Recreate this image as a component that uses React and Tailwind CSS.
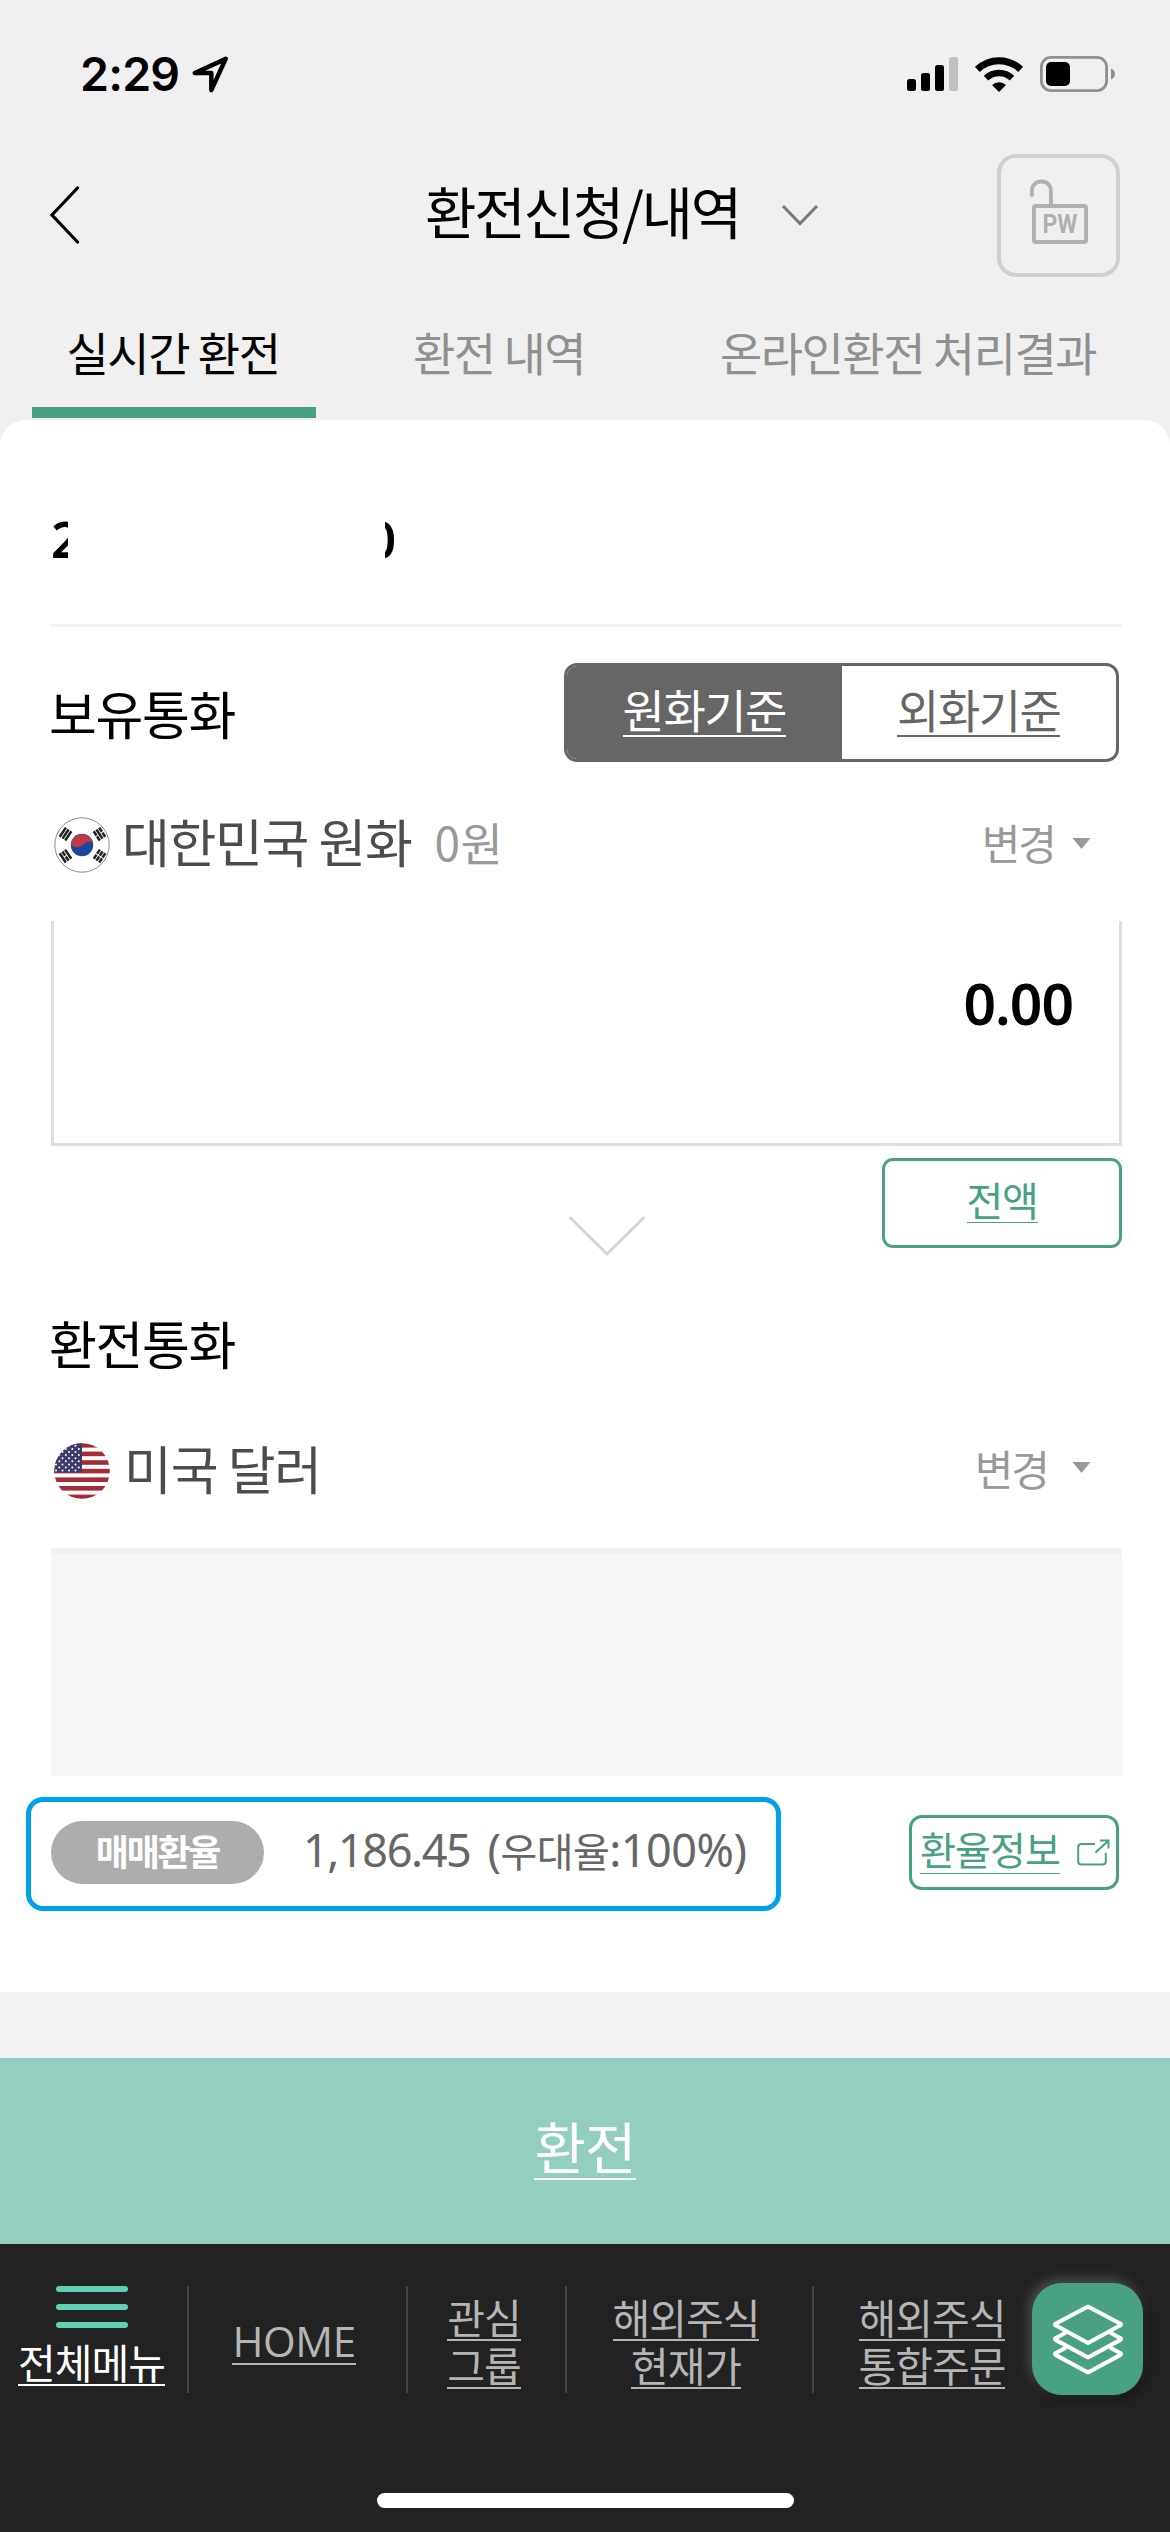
import React, { useState } from "react";

const TABS = [
  { id: "live", label: "실시간 환전", box: "w-[284px] ml-[32px]" },
  { id: "history", label: "환전 내역", box: "w-[212px] ml-[78px]" },
  { id: "result", label: "온라인환전 처리결과", box: "w-[420px] ml-[93px]" },
];

const BASIS = [
  { id: "krw", label: "원화기준" },
  { id: "foreign", label: "외화기준" },
];

const SHORTCUTS = [
  { lines: ["HOME"], box: "w-[219px] pr-[7px]" },
  { lines: ["관심", "그룹"], box: "w-[159px] pr-[5px]" },
  { lines: ["해외주식", "현재가"], box: "w-[247px] pr-[7px]" },
  { lines: ["해외주식", "통합주문"], box: "w-[238px]" },
];

/*
==========================
ICONS
==========================
*/

function LocationIcon() {
  return (
    <svg className="w-[37px] h-[37px]" viewBox="0 0 36 36" fill="none">
      <path
        d="M32.8 2.8 L2.8 16.6 H18.8 V33.2 Z"
        stroke="#000"
        strokeWidth="4.4"
        strokeLinejoin="round"
      />
    </svg>
  );
}

function SignalIcon() {
  return (
    <svg className="w-[51px] h-[34px]" viewBox="0 0 51 34">
      <rect x="0" y="22" width="9" height="12" rx="2.5" />
      <rect x="14" y="16" width="9" height="18" rx="2.5" />
      <rect x="28" y="8" width="9" height="26" rx="2.5" />
      <rect x="42" y="0" width="9" height="34" rx="2.5" fill="#c0c0c0" />
    </svg>
  );
}

function WifiIcon() {
  return (
    <svg className="w-[48px] h-[36px]" viewBox="0 0 48 36" fill="none">
      <path d="M2.4 13.4 A31 31 0 0 1 45.6 13.4" stroke="#000" strokeWidth="7" />
      <path d="M11 22.2 A18.8 18.8 0 0 1 37 22.2" stroke="#000" strokeWidth="6.6" />
      <path d="M17 29 A10.6 10.6 0 0 1 31 29 L24 36 Z" fill="#000" />
    </svg>
  );
}

function BatteryIcon() {
  return (
    <svg className="w-[76px] h-[36px]" viewBox="0 0 76 36">
      <rect x="1.4" y="1.4" width="65.2" height="33.2" rx="9.5" fill="none" stroke="#909090" strokeWidth="2.8" />
      <rect x="6" y="6" width="24" height="24" rx="5" />
      <path d="M71 12.5 Q75 14.5 75 18 Q75 21.5 71 23.5 Z" fill="#909090" />
    </svg>
  );
}

function UnlockPwIcon() {
  return (
    <svg className="mb-[9px] w-[60px] h-[66px]" viewBox="0 0 60 66" fill="none">
      <path d="M2.9 17 V12.5 A9 9 0 0 1 11.9 3.5 H12.9 A9 9 0 0 1 21.9 12.5 V27" stroke="#b0b0b0" strokeWidth="3.8" strokeLinecap="round" />
      <rect x="4.9" y="28" width="52.2" height="36" rx="2" stroke="#b0b0b0" strokeWidth="3.8" />
      <text x="13.5" y="54.8" textLength="35" lengthAdjust="spacingAndGlyphs" fontFamily="Roboto, sans-serif" fontWeight="700" fontSize="25" fill="#b0b0b0">
        PW
      </text>
    </svg>
  );
}

function ExternalIcon() {
  return (
    <svg className="w-[33px] h-[27px]" viewBox="0 0 33 27" fill="none" stroke="#48a184" strokeWidth="2">
      <path d="M18 5 H4.5 Q1.2 5 1.2 8.3 V22.2 Q1.2 25.5 4.5 25.5 H25.5 Q28.8 25.5 28.8 22.2 V14" />
      <path d="M18.5 13.5 L30.5 2.5 M23 1.5 H31.5 V9.5" />
    </svg>
  );
}

function LayersIcon() {
  return (
    <svg className="w-[72px] h-[72px]" viewBox="0 0 72 72" fill="none" stroke="#fff" strokeWidth="4.2" strokeLinejoin="round">
      <path d="M36 3.5 L68 20.5 Q70 21.5 68 22.5 L36 40 L4 22.5 Q2 21.5 4 20.5 Z" />
      <path d="M14 29.5 L4 35 Q2 36 4 37.2 L36 54.5 L68 37.2 Q70 36 68 35 L58 29.5" />
      <path d="M14 44.5 L4 50 Q2 51 4 52.2 L36 69.5 L68 52.2 Q70 51 68 50 L58 44.5" />
    </svg>
  );
}

function KoreaFlag() {
  // trigrams: 1 = solid bar, 0 = broken bar
  const trigrams = [
    { x: 11.5, y: 17, rotate: -56, bars: [1, 1, 1] },
    { x: 45.5, y: 17, rotate: 56, bars: [0, 1, 0] },
    { x: 11.5, y: 39, rotate: 56, bars: [1, 0, 1] },
    { x: 45.5, y: 39, rotate: -56, bars: [0, 0, 0] },
  ];

  return (
    <svg className="w-[56px] h-[56px]" viewBox="0 0 56 56">
      <circle cx="28" cy="28" r="27.2" fill="#fff" stroke="#8c8c8c" strokeWidth="1" />
      <circle cx="28" cy="28" r="11.2" fill="#1c469c" />
      <path d="M17 27 A11.2 11.2 0 0 1 38.9 25.5 C36 23.5 31 26 28 28.5 C24 31.5 19 30.5 17 27 Z" fill="#be3a40" />
      {trigrams.map((t) => (
        <g key={`${t.x}-${t.y}`} transform={`translate(${t.x} ${t.y}) rotate(${t.rotate})`}>
          {t.bars.map((solid, i) => (
            <g key={i} fill="#222">
              <rect x="-5.5" y={i * 3.3 - 4.5} width={solid ? 11 : 5} height="2.5" />
              {!solid && <rect x="0.5" y={i * 3.3 - 4.5} width="5" height="2.5" />}
            </g>
          ))}
        </g>
      ))}
    </svg>
  );
}

function UsaFlag() {
  const stars = [];
  for (let row = 0; row < 9; row++) {
    for (let col = 0; col < 5; col++) {
      const x = col * 6.5 + (row % 2 ? -1.2 : 2);
      if (x < 27) stars.push([x, 2.8 + row * 3.1]);
    }
  }

  return (
    <svg className="w-[56px] h-[56px]" viewBox="0 0 56 56">
      <clipPath id="usa-round">
        <circle cx="28" cy="28" r="27.8" />
      </clipPath>
      <g clipPath="url(#usa-round)">
        <rect width="56" height="56" fill="#fff" />
        {[0, 1, 2, 3, 4, 5, 6].map((i) => (
          <rect key={i} x="0" y={i * 8.6} width="56" height="4.6" fill="#a32c35" />
        ))}
        <rect width="28" height="29.5" fill="#3d3b6b" />
        {stars.map(([x, y]) => (
          <circle key={`${x}-${y}`} cx={x} cy={y} r="1" fill="#fff" />
        ))}
      </g>
    </svg>
  );
}

/*
==========================
SECTIONS
==========================
*/

function StatusBar() {
  return (
    <div className="h-[148px] flex items-center justify-between pl-[80px] pr-[54px]">
      <div className="flex items-center gap-[13px]">
        <span className="font-['Inter'] font-semibold text-[46.5px] leading-none tracking-[-0.8px]">
          2:29
        </span>
        <LocationIcon />
      </div>
      <div className="flex items-center">
        <SignalIcon />
        <div className="ml-[17px]">
          <WifiIcon />
        </div>
        <div className="ml-[17px]">
          <BatteryIcon />
        </div>
      </div>
    </div>
  );
}

function Header() {
  return (
    <header className="h-[134px] flex items-center pl-[49px]">
      <svg className="w-[32px] h-[60px]" viewBox="0 0 32 60" fill="none">
        <path d="M28.5 3 L3 30 L28.5 57" stroke="#000" strokeWidth="3.2" strokeLinecap="round" />
      </svg>
      <h1 className="ml-[344px] w-[331px] text-[56px] leading-[80px] tracking-[-2.3px] font-normal whitespace-nowrap -mt-[10px]">
        환전신청/내역
      </h1>
      <svg className="ml-[25px] w-[38px] h-[22px]" viewBox="0 0 38 22" fill="none">
        <path d="M2 2 L19 19.5 L36 2" stroke="#777" strokeWidth="3" />
      </svg>
      <button className="ml-[178px] w-[123px] h-[123px] rounded-[19px] border-4 border-[#cfcfcf] flex items-center justify-center">
        <UnlockPwIcon />
      </button>
    </header>
  );
}

function TabBar({ active, onChange }) {
  return (
    <nav className="h-[138px] flex">
      {TABS.map((tab) => (
        <button
          key={tab.id}
          onClick={() => onChange(tab.id)}
          className={`${tab.box} h-[136px] flex flex-col items-center whitespace-nowrap text-[46px] leading-[60px] tracking-[-1.5px] pt-[39px] ${
            active === tab.id ? "text-black" : "text-[#909090]"
          }`}
        >
          <span className="-ml-[2px]">{tab.label}</span>
          {active === tab.id && <span className="w-full h-[11px] mt-auto bg-[#48a184]" />}
        </button>
      ))}
    </nav>
  );
}

function ChangeButton({ gap, arrow }) {
  return (
    <button className={`ml-auto mr-[31px] flex items-center text-[42px] tracking-[-2px] text-[#999] ${gap}`}>
      <span className="leading-[60px] -mt-[6px]">변경</span>
      <svg className={`w-[19px] h-[11px] ${arrow}`} viewBox="0 0 18 11">
        <path d="M0 0 H18 L9 11 Z" fill="#999" />
      </svg>
    </button>
  );
}

function Footer() {
  return (
    <footer className="h-[288px] bg-[#222] flex flex-col items-center">
      <div className="w-full h-[149px] flex items-end">
        <button className="w-[187px] pr-[4px] h-[107px] flex flex-col items-center text-white">
          <span className="w-[72px] h-[42px] flex flex-col justify-between">
            <i className="h-[6px] rounded-full bg-[#5fd1b2]" />
            <i className="h-[6px] rounded-full bg-[#5fd1b2]" />
            <i className="h-[6px] rounded-full bg-[#5fd1b2]" />
          </span>
          <span className="mt-[10px] h-[48px] border-b-2 border-white text-[41px] leading-[46px] tracking-[-1px]">
            전체메뉴
          </span>
        </button>
        {SHORTCUTS.map((item, i) => (
          <button
            key={i}
            className={`${item.box} h-[107px] border-l-2 border-[#444] flex flex-col items-center justify-center pt-[2px] text-[#b5b5b5]`}
          >
            {item.lines.map((line) =>
              line === "HOME" ? (
                <span key={line} className="mt-[2px] h-[46px] border-b-2 border-[#b5b5b5] font-['Open_Sans'] text-[42px] leading-[43px] tracking-[-0.4px]">
                  {line}
                </span>
              ) : (
                <span key={line} className="mt-px h-[47px] border-b-2 border-[#b5b5b5] text-[41px] leading-[44px] tracking-[-1px]">
                  {line}
                </span>
              ),
            )}
          </button>
        ))}
        <button className="-ml-[18px] mb-[-2px] w-[111px] h-[112px] rounded-[30px] bg-[#48a184] flex items-center justify-center shadow-[-3px_-4px_12px_rgba(255,255,255,0.2),4px_6px_10px_rgba(0,0,0,0.3)]">
          <LayersIcon />
        </button>
      </div>
      <div className="mt-[100px] w-[417px] h-[15px] rounded-full bg-white" />
    </footer>
  );
}

export default function App() {
  const [tab, setTab] = useState("live");
  const [basis, setBasis] = useState("krw");

  return (
    <div className="w-[1170px] h-[2532px] overflow-hidden bg-[#f0f0f0] text-black font-['Noto_Sans_CJK_KR',sans-serif]">
      <StatusBar />
      <Header />
      <TabBar active={tab} onChange={setTab} />

      <main className="h-[1572px] bg-white rounded-t-[26px] pl-[51px] pr-[48px]">
        {/* ACCOUNT (number hidden, only its edges show) */}
        <div className="h-[207px] border-b-[3px] border-[#f2f2f2] pt-[89px] flex font-['Noto_Sans'] font-semibold text-[50px] leading-[60px]">
          <span className="w-[17px] overflow-hidden">2</span>
          <span className="ml-[317px] w-[11px] overflow-hidden flex justify-end">0</span>
        </div>

        {/* HELD CURRENCY */}
        <div className="h-[171px] flex items-center justify-between pr-[3px]">
          <h2 className="-ml-[2px] text-[52px] leading-[70px] tracking-[-1.3px] font-normal">보유통화</h2>
          <div className="w-[555px] h-[99px] flex rounded-[13px] border-[3px] border-[#666] overflow-hidden">
            {BASIS.map((item) => (
              <button
                key={item.id}
                onClick={() => setBasis(item.id)}
                className={`flex-1 flex justify-center pt-[13px] text-[46px] tracking-[-1.5px] ${
                  basis === item.id ? "bg-[#666] text-white" : "text-[#666]"
                }`}
              >
                <span className="h-[58px] leading-[58px] border-b-2 border-current">{item.label}</span>
              </button>
            ))}
          </div>
        </div>

        <div className="h-[93px] mb-[30px] flex items-center pl-[3px]">
          <KoreaFlag />
          <span className="ml-[12px] text-[52px] leading-[70px] tracking-[-1.3px] text-[#4c4c4c] -mt-[8px]">대한민국 원화</span>
          <span className="ml-[23px] text-[46px] leading-[70px] tracking-[0.3px] text-[#999] -mt-[8px]">0원</span>
          <ChangeButton gap="gap-[17px]" arrow="-mt-[3px]" />
        </div>

        <div className="h-[225px] border-x-[3px] border-b-[3px] border-[#dedede] pt-[42px] pr-[46px] text-right font-['Noto_Sans'] font-semibold text-[57px] leading-[80px] tracking-[-1px]">
          0.00
        </div>

        <div className="h-[144px] flex justify-between pl-[517px] pt-[12px]">
          <svg className="mt-[57px] w-[78px] h-[42px]" viewBox="0 0 78 42" fill="none">
            <path d="M1.5 2 L39 39 L76.5 2" stroke="#d5d5d5" strokeWidth="3" />
          </svg>
          <button className="w-[240px] h-[90px] rounded-[11px] border-[3px] border-[#48a184] flex justify-center pt-[11px] text-[40px] tracking-[-1.3px] text-[#48a184]">
            <span className="h-[51px] leading-[54px] border-b border-current">전액</span>
          </button>
        </div>

        {/* TARGET CURRENCY */}
        <h2 className="-ml-[2px] h-[110px] leading-[110px] text-[52px] tracking-[-1.3px] font-normal -mt-[2px] mb-[2px]">환전통화</h2>

        <div className="h-[142px] mb-[6px] flex items-center pl-[3px]">
          <UsaFlag />
          <span className="ml-[14px] text-[52px] leading-[70px] tracking-[-1.2px] text-[#4c4c4c] -mt-[6px]">미국 달러</span>
          <ChangeButton gap="gap-[24px]" arrow="-mt-[8px]" />
        </div>

        <div className="h-[228px] bg-[#f6f6f6] border-t-[6px] border-[#f1f1f1]" />

        {/* RATE */}
        <div className="mt-[21px] flex items-center justify-between pr-[3px]">
          <div className="-ml-[25px] w-[755px] h-[114px] rounded-[17px] border-[5px] border-[#00a2e9] flex items-center pl-[20px] pb-[3px]">
            <span className="w-[213px] h-[63px] rounded-full bg-[#adadad] text-white font-bold text-[36px] leading-[59px] tracking-[-2.3px] text-center">
              매매환율
            </span>
            <span className="ml-[39px] flex gap-[17px] font-['Noto_Sans','Noto_Sans_CJK_KR',sans-serif] text-[45px] leading-[60px] tracking-[-1.4px] text-[#666] whitespace-nowrap -mt-[3px]">
              <span>1,186.45</span>
              <span className="tracking-[-0.5px]">
                (<span className="text-[40px]">우대율</span>:100%)
              </span>
            </span>
          </div>
          <button className="w-[210px] h-[75px] -mt-[3px] rounded-[13px] border-[3px] border-[#48a184] flex pl-[8px] pt-[3px] text-[39px] tracking-[-0.9px] text-[#48a184]">
            <span className="h-[53px] leading-[55px] border-b border-current whitespace-nowrap">환율정보</span>
            <span className="ml-[17px] mt-[18px]">
              <ExternalIcon />
            </span>
          </button>
        </div>
      </main>

      <div className="h-[66px] bg-[#f3f3f3]" />
      <button className="w-full h-[186px] bg-[#93cfc0] flex justify-center pt-[50px] text-white text-[56px] tracking-[-1px]">
        <span className="h-[72px] leading-[74px] border-b-2 border-white">환전</span>
      </button>
      <Footer />
    </div>
  );
}
